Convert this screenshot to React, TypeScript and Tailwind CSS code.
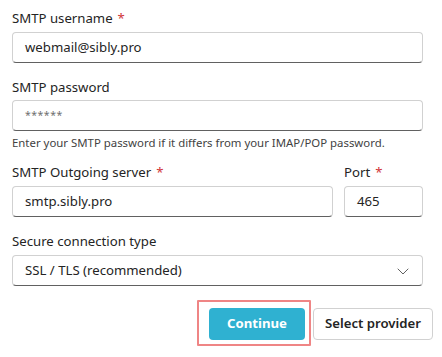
import React from "react";

function Label({ text, required }: { text: string; required?: boolean }) {
  return (
    <div className="h-[20px] text-[13.2px] leading-[20px] text-[#242424]">
      {text}
      {required && <span className="ml-[5px] text-[#d13438]">*</span>}
    </div>
  );
}

function Field({ value, placeholder }: { value?: string; placeholder?: string }) {
  return (
    <div className="flex h-[31px] items-center rounded-[4px] border border-[#d1d1d1] border-b-[#616161] bg-white px-[12px] text-[13.2px] text-[#242424]">
      {value ? value : <span className="text-[10.5px] tracking-[0.5px] text-[#707070]">{placeholder}</span>}
    </div>
  );
}

export default function App() {
  return (
    <div className="w-[435px] bg-white px-[12px] pt-[8px] font-['Noto_Sans','Open_Sans',sans-serif]">
      <div className="flex flex-col gap-[4px]">
        <Label text="SMTP username" required />
        <Field value="webmail@sibly.pro" />
      </div>

      <div className="mt-[14px] flex flex-col gap-[3px]">
        <Label text="SMTP password" />
        <Field placeholder="******" />
        <div className="mt-[1px] text-[11.4px] leading-[16px] text-[#424242]">
          Enter your SMTP password if it differs from your IMAP/POP password.
        </div>
      </div>

      <div className="mt-[11px] flex gap-[11px]">
        <div className="flex flex-1 flex-col gap-[4px]">
          <Label text="SMTP Outgoing server" required />
          <Field value="smtp.sibly.pro" />
        </div>
        <div className="flex w-[79px] flex-col gap-[4px]">
          <Label text="Port" required />
          <Field value="465" />
        </div>
      </div>

      <div className="mt-[14px] flex flex-col gap-[4px]">
        <Label text="Secure connection type" />
        <div className="flex h-[31px] items-center justify-between rounded-[4px] border border-[#d1d1d1] border-b-[#616161] bg-white px-[12px] text-[13.2px] text-[#242424]">
          <span>SSL / TLS (recommended)</span>
          <svg width="14" height="14" viewBox="0 0 14 14" fill="none">
            <path d="M2 5l5 5 5-5" stroke="#616161" strokeWidth="1" strokeLinecap="round" strokeLinejoin="round" />
          </svg>
        </div>
      </div>

      <div className="mr-[-10px] mt-[14px] flex justify-end gap-[2px]">
        <div className="rounded-[1px] border-2 border-[#ef8585] pb-[4px] pl-[10px] pr-[4px] pt-[6px]">
          <button className="flex h-[32px] w-[96px] items-center justify-center rounded-[4px] bg-[#2fb1d1] text-[13.2px] font-bold text-white">
            Continue
          </button>
        </div>
        <div className="flex items-start pt-[8px]">
          <button className="flex h-[32px] w-[120px] items-center justify-center rounded-[4px] border border-[#d1d1d1] bg-white text-[13.2px] font-semibold text-[#242424]">
            Select provider
          </button>
        </div>
      </div>
    </div>
  );
}
